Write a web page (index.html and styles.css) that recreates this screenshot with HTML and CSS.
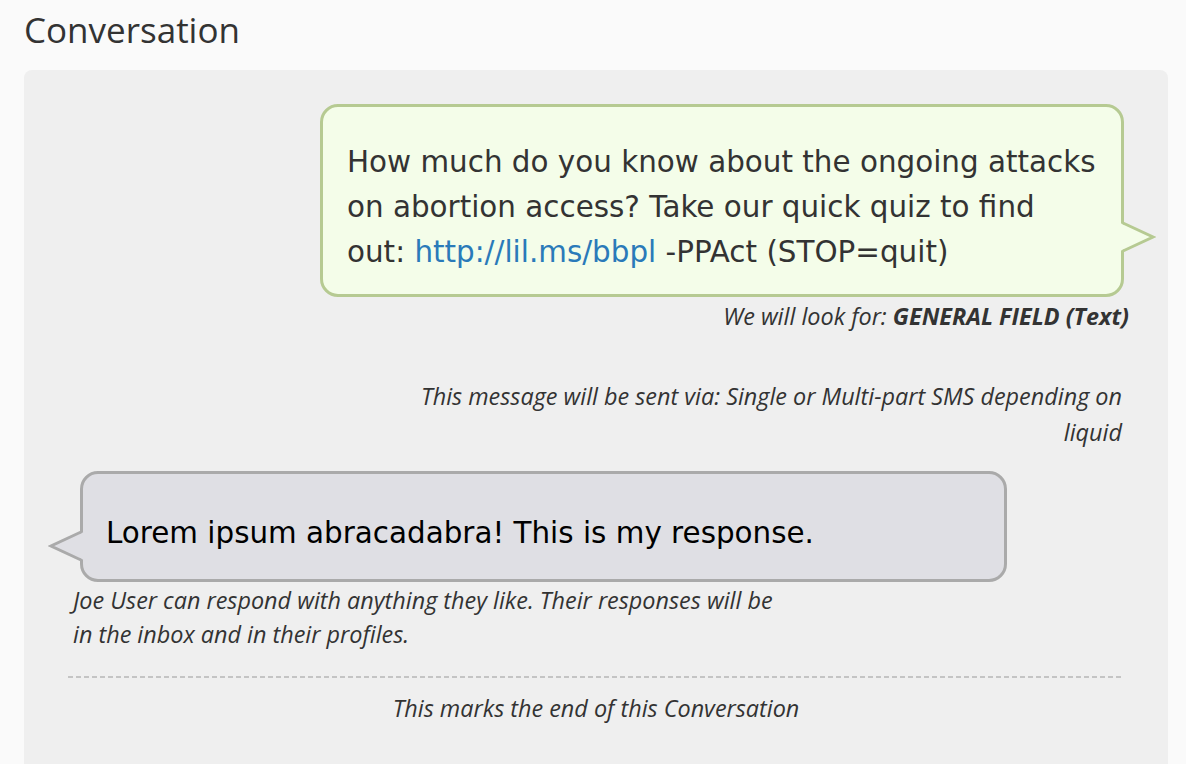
FILE: index.html
```html
<!DOCTYPE html>
<html lang="en">
<head>
    <meta charset="UTF-8">
    <title>Conversation</title>
    <link rel="stylesheet" href="styles.css">
</head>
<body>
    <h2 class="page-title">Conversation</h2>

    <div class="conversation">
        <!-- Outgoing message -->
        <div class="step step-out">
            <div class="bubble bubble-out">
                How much do you know about the ongoing attacks on abortion access? Take our quick quiz to find out: <a href="#">http://lil.ms/bbpl</a> -PPAct (STOP=quit)
                <svg class="tail tail-right" width="36" height="34" viewBox="0 0 36 34">
                    <polygon points="0,3 33,17 0,31" fill="#f4fde9"/>
                    <polyline points="3,3 33,17 3,31" fill="none" stroke="#b6ca92" stroke-width="3" stroke-linejoin="miter"/>
                </svg>
            </div>
            <p class="note note-field">We will look for: <b>GENERAL FIELD (Text)</b></p>
            <p class="note note-via">This message will be sent via: Single or Multi-part SMS depending on liquid</p>
        </div>

        <!-- Response -->
        <div class="step step-in">
            <div class="bubble bubble-in">
                Lorem ipsum abracadabra! This is my response.
                <svg class="tail tail-left" width="36" height="34" viewBox="0 0 36 34">
                    <polygon points="36,3 3,17 36,31" fill="#dfdfe4"/>
                    <polyline points="33,3 3,17 33,31" fill="none" stroke="#aaaaaa" stroke-width="3" stroke-linejoin="miter"/>
                </svg>
            </div>
            <p class="note note-reply">Joe User can respond with anything they like. Their responses will be in the inbox and in their profiles.</p>
        </div>

        <div class="end-line"></div>
        <p class="note note-end">This marks the end of this Conversation</p>
    </div>
</body>
</html>
```

FILE: styles.css
```css
body {
    margin: 0;
    background-color: #fafafa;
    font-family: "Open Sans", Arial, sans-serif;
    color: #333;
}

.page-title {
    margin: 0;
    padding: 8px 24px 0;
    font-size: 35px;
    font-weight: 400;
    line-height: 44px;
    color: #333;
}

.conversation {
    margin: 18px 18px 0 24px;
    padding: 34px 44px 60px;
    background-color: #efefef;
    border-radius: 8px;
}

.step {
    display: flex;
    flex-direction: column;
}

.step-out {
    align-items: flex-end;
}

.step-in {
    align-items: flex-start;
    margin-top: 21px;
}

.bubble {
    position: relative;
    box-sizing: border-box;
    padding: 33px 24px 19px;
    border-radius: 18px;
    font-family: "DejaVu Sans", Verdana, sans-serif;
    font-size: 29.4px;
    line-height: 45px;
}

.bubble-out {
    width: 804px;
    background-color: #f4fde9;
    border: 3px solid #b6ca92;
    color: #333;
}

.bubble-out a {
    color: #2a7ab9;
    text-decoration: none;
}

.bubble-in {
    width: 927px;
    margin-left: 12px;
    padding: 37px 24px 23px 23px;
    background-color: #dfdfe4;
    border: 3px solid #aaaaaa;
    color: #000;
}

.tail {
    position: absolute;
    display: block;
}

.tail-right {
    right: -35px;
    top: 113px;
}

.tail-left {
    left: -35px;
    top: 55px;
}

.note {
    margin: 0;
    font-style: italic;
    font-size: 23.4px;
    line-height: 36px;
    color: #333;
}

.note-field {
    margin-right: -5px;
    line-height: 38px;
}

.note-via {
    max-width: 730px;
    margin-top: 43px;
    margin-right: 2px;
    text-align: right;
}

.note-reply {
    max-width: 720px;
    margin-top: 1px;
    margin-left: 5px;
    line-height: 34px;
}

.end-line {
    height: 2px;
    margin-top: 25px;
    background-image: repeating-linear-gradient(to right, #c4c4c4 0, #c4c4c4 5px, transparent 5px, transparent 8px);
}

.note-end {
    margin-top: 12px;
    text-align: center;
}
```
